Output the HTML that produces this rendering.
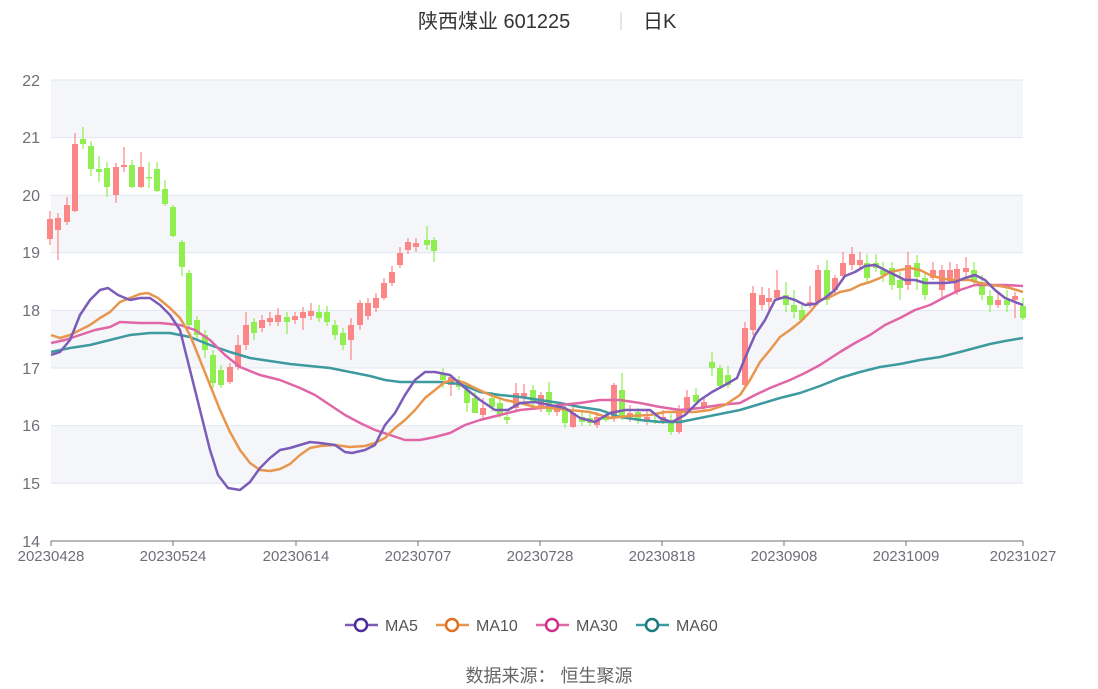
<!DOCTYPE html>
<html><head><meta charset="utf-8"><style>
body{margin:0;background:#fff;width:1098px;height:689px;overflow:hidden;font-family:"Liberation Sans","Noto Sans CJK SC",sans-serif}
</style></head><body>
<svg id="s" width="1098" height="689" xmlns="http://www.w3.org/2000/svg" style="position:absolute;left:0;top:0">
<g fill="#f5f6fa">
<rect x="51" y="80" width="972" height="57.6"/>
<rect x="51" y="195.2" width="972" height="57.6"/>
<rect x="51" y="310.4" width="972" height="57.6"/>
<rect x="51" y="425.6" width="972" height="57.6"/>
</g>
<g stroke="#e0e6f1" stroke-width="1">
<line x1="51" x2="1023" y1="80" y2="80"/><line x1="51" x2="1023" y1="137.6" y2="137.6"/>
<line x1="51" x2="1023" y1="195.2" y2="195.2"/><line x1="51" x2="1023" y1="252.8" y2="252.8"/>
<line x1="51" x2="1023" y1="310.4" y2="310.4"/><line x1="51" x2="1023" y1="368" y2="368"/>
<line x1="51" x2="1023" y1="425.6" y2="425.6"/><line x1="51" x2="1023" y1="483.2" y2="483.2"/>
</g>
<line x1="51" x2="1023" y1="541" y2="541" stroke="#6e7079"/>
<g stroke="#6e7079"><line x1="51" x2="51" y1="541" y2="546"/><line x1="173" x2="173" y1="541" y2="546"/><line x1="296" x2="296" y1="541" y2="546"/><line x1="418" x2="418" y1="541" y2="546"/><line x1="540" x2="540" y1="541" y2="546"/><line x1="662" x2="662" y1="541" y2="546"/><line x1="784" x2="784" y1="541" y2="546"/><line x1="906" x2="906" y1="541" y2="546"/><line x1="1023" x2="1023" y1="541" y2="546"/></g>
<g font-size="16" fill="#6e7079" text-anchor="end">
<text x="40" y="86">22</text><text x="40" y="143">21</text><text x="40" y="201">20</text><text x="40" y="258">19</text><text x="40" y="316">18</text><text x="40" y="374">17</text><text x="40" y="431">16</text><text x="40" y="489">15</text><text x="40" y="547">14</text>
</g>
<g font-size="15" fill="#6e7079" text-anchor="middle">
<text x="51" y="561">20230428</text><text x="173" y="561">20230524</text><text x="296" y="561">20230614</text><text x="418" y="561">20230707</text><text x="540" y="561">20230728</text><text x="662" y="561">20230818</text><text x="784" y="561">20230908</text><text x="906" y="561">20231009</text><text x="1023" y="561">20231027</text>
</g>
<g id="c"></g>
<g fill="none" stroke-width="2.5" stroke-linejoin="round">
<polyline stroke="#3d9a9e" points="51,352 70,348 90,345 110,340 130,335 150,333 170,333 190,337 210,345 230,352 250,358 270,361 290,364 310,366 330,368 350,372 370,376 385,380 400,382 420,382 440,382 460,384 480,392 500,395 520,397 540,400 560,403 580,407 600,410 620,417 640,420 660,422 680,422 700,418 720,414 740,410 760,404 780,398 800,393 820,386 840,378 860,372 880,367 900,364 920,360 940,357 960,352 975,348 990,344 1005,341 1023,338"/>
<polyline stroke="#e066a6" points="51,343 65,340 80,335 95,330 110,327 120,322 140,323 160,323 180,325 195,330 210,340 225,355 240,367 260,375 280,380 300,388 315,395 330,405 345,415 360,423 375,430 390,435 405,440 420,440 435,437 450,433 465,425 480,420 500,415 520,410 540,408 560,405 580,403 600,400 620,400 640,403 660,407 680,410 700,408 720,405 740,403 755,395 770,388 790,380 805,373 820,365 840,352 855,343 870,335 885,325 900,318 915,310 930,305 945,297 960,290 975,285 990,285 1005,285 1023,286"/>
<polyline stroke="#e8964e" points="51,335 60,338 70,335 80,330 90,325 100,318 110,312 120,302 130,298 140,294 148,293 158,298 170,308 180,318 190,335 200,360 210,385 220,410 230,432 240,450 250,463 260,470 270,471 280,469 290,464 300,455 310,448 320,446 335,445 350,447 365,446 375,443 385,438 395,428 405,420 415,410 425,398 435,390 445,382 455,380 465,383 475,388 490,395 505,400 520,403 535,407 550,408 570,410 590,412 610,418 630,416 650,415 665,412 680,412 695,412 710,410 725,405 740,395 750,380 760,362 770,350 780,337 790,330 800,322 810,312 820,300 830,297 840,292 850,290 860,285 870,282 880,278 890,272 900,270 910,268 920,270 930,275 940,278 950,280 960,280 970,280 980,283 990,285 1000,286 1010,288 1023,292"/>
<polyline stroke="#7b5cb8" points="51,355 60,352 70,340 80,315 90,300 100,290 108,288 118,295 130,300 140,298 150,298 160,305 170,315 180,330 190,370 200,410 210,450 218,475 228,488 240,490 250,482 260,468 270,458 280,450 290,448 300,445 310,442 320,443 335,445 345,452 352,453 365,450 375,445 385,425 395,413 405,395 415,380 425,372 435,372 450,375 465,388 480,400 495,410 508,410 520,403 535,402 550,405 565,408 580,418 595,422 610,413 625,410 650,410 660,418 672,422 685,415 700,400 712,392 725,385 737,378 745,358 755,335 765,320 775,300 785,297 795,300 805,305 815,304 825,298 835,290 845,276 855,272 865,266 875,265 885,270 895,275 905,280 915,280 925,283 935,283 945,283 955,282 965,278 975,275 985,280 995,290 1005,298 1015,302 1023,305"/>
</g>
<text x="418" y="28" font-size="20" fill="#333">陕西煤业 601225</text>
<line x1="621" x2="621" y1="12" y2="30" stroke="#ccc"/>
<text x="643" y="28" font-size="20" fill="#333">日K</text>
<g stroke-width="2.5" fill="#fff">
<line x1="345" x2="378" y1="625" y2="625" stroke="#7b5cb8"/><circle cx="361" cy="625" r="6" stroke="#4b2d9a"/>
<line x1="436" x2="469" y1="625" y2="625" stroke="#e8964e"/><circle cx="452" cy="625" r="6" stroke="#e07020"/>
<line x1="536" x2="569" y1="625" y2="625" stroke="#e066a6"/><circle cx="552" cy="625" r="6" stroke="#d0308a"/>
<line x1="636" x2="669" y1="625" y2="625" stroke="#3d9a9e"/><circle cx="652" cy="625" r="6" stroke="#1a7a7e"/>
</g>
<g font-size="16" fill="#555">
<text x="385" y="631">MA5</text><text x="476" y="631">MA10</text><text x="576" y="631">MA30</text><text x="676" y="631">MA60</text>
</g>
<text x="549" y="682" font-size="18" fill="#666" text-anchor="middle">数据来源：  恒生聚源</text>
</svg>
<script>
var d=[
[50,219,239,1,211,245],[58,218,230,1,213,260],[67,205,222,1,197,225],[75,144,211,1,133,212],[83,139,144,0,127,149],[91,146,169,0,141,176],[99,169,172,0,156,182],[107,168,187,0,162,197],[116,167,195,1,163,203],[124,165,167,1,147,172],[132,165,187,0,160,188],[141,167,187,1,152,188],[149,177,178,0,162,188],[157,169,191,0,162,192],[165,189,204,0,180,206],[173,207,236,0,205,237],[182,242,267,0,240,276],[189,273,325,0,270,328],
[197,320,335,0,316,340],[205,335,350,0,330,358],[213,355,383,0,350,388],[221,370,385,0,365,388],[230,367,382,1,363,384],[238,345,367,1,335,370],[246,325,345,1,312,350],[254,322,333,0,318,340],[262,320,328,1,315,332],[270,318,322,1,312,326],[278,315,322,1,308,326],[287,317,322,0,312,334],[295,316,320,1,312,324],[303,312,318,1,307,330],[311,311,316,1,303,320],[319,312,318,0,305,322],[327,312,322,0,306,326],[335,325,335,0,320,340],[343,333,345,0,328,350],[351,325,340,1,318,360],[360,303,325,1,300,330],[368,303,316,1,298,320],[376,298,308,1,293,312],[384,283,298,1,278,300],[392,272,283,1,266,286],[400,253,265,1,247,268],[408,242,250,1,238,254],[416,243,247,1,238,252],[427,240,245,0,226,250],[434,240,251,0,237,262],
[443,374,380,0,368,388],[451,377,385,1,375,396],[459,382,387,0,376,390],[467,390,403,0,385,412],[475,398,413,0,392,413],[483,408,415,1,398,420],[492,398,407,0,392,412],[500,403,415,0,398,418],[507,417,420,0,410,424],[516,393,408,1,383,410],[524,393,397,1,384,402],[533,390,403,0,385,408],[541,395,407,1,392,412],[549,392,412,0,382,415],[557,407,412,1,404,416],[565,410,423,0,404,428],[573,413,427,1,405,428],[582,417,422,0,410,426],[590,418,423,0,412,426],[597,417,425,1,412,428],[606,415,420,0,410,422],[614,385,418,1,383,422],[622,390,417,0,373,420],[630,413,415,1,405,422],[638,412,420,0,408,424],[647,417,422,1,410,425],[655,420,422,0,414,424],[663,417,422,1,410,424],[671,420,432,0,414,435],[679,413,432,1,405,434],[687,397,413,1,390,415],[696,395,402,0,388,405],[704,402,407,1,398,410],[712,362,368,0,352,376],[720,368,386,0,365,388],
[728,375,385,0,366,388],[745,328,385,1,322,387],[753,293,330,1,286,335],[762,295,305,1,287,310],[769,298,302,1,288,312],[777,290,298,1,270,300],[786,295,305,0,282,312],[794,305,312,0,290,318],[802,310,320,0,305,322],[810,302,305,1,286,308],[818,270,302,1,265,305],[827,270,300,0,260,305],[835,278,290,1,275,295],[843,263,276,1,252,280],[852,254,265,1,247,270],[860,260,265,1,252,270],[867,263,278,0,254,282],[876,263,268,0,254,272],[883,270,275,0,262,282],[892,268,285,0,262,290],[900,280,288,0,272,300],[908,265,285,1,252,290],[917,263,277,0,255,290],[925,278,295,0,272,300],[933,270,278,1,262,280],[942,270,290,1,265,300],[950,270,280,1,262,282],[957,269,292,1,264,295],[966,268,272,1,257,278],[974,270,282,0,262,286],[982,282,295,0,275,300],[990,296,305,0,290,312],[998,300,305,1,292,308],[1007,300,305,0,290,312],[1015,296,300,1,292,318],[1023,306,318,0,298,320]];
var g=document.getElementById('c'),h='';
d.forEach(function(c){var col=c[3]?'#fc8585':'#90ee50';var t=Math.min(c[1],c[2]),b=Math.max(c[1],c[2]);if(b-t<1.5)b=t+1.5;
h+='<line x1="'+c[0]+'" x2="'+c[0]+'" y1="'+c[4]+'" y2="'+c[5]+'" stroke="'+col+'" stroke-width="1.2"/>';
h+='<rect x="'+(c[0]-3)+'" y="'+t+'" width="6" height="'+(b-t)+'" fill="'+col+'"/>';});
g.innerHTML=h;
</script>
</body></html>
